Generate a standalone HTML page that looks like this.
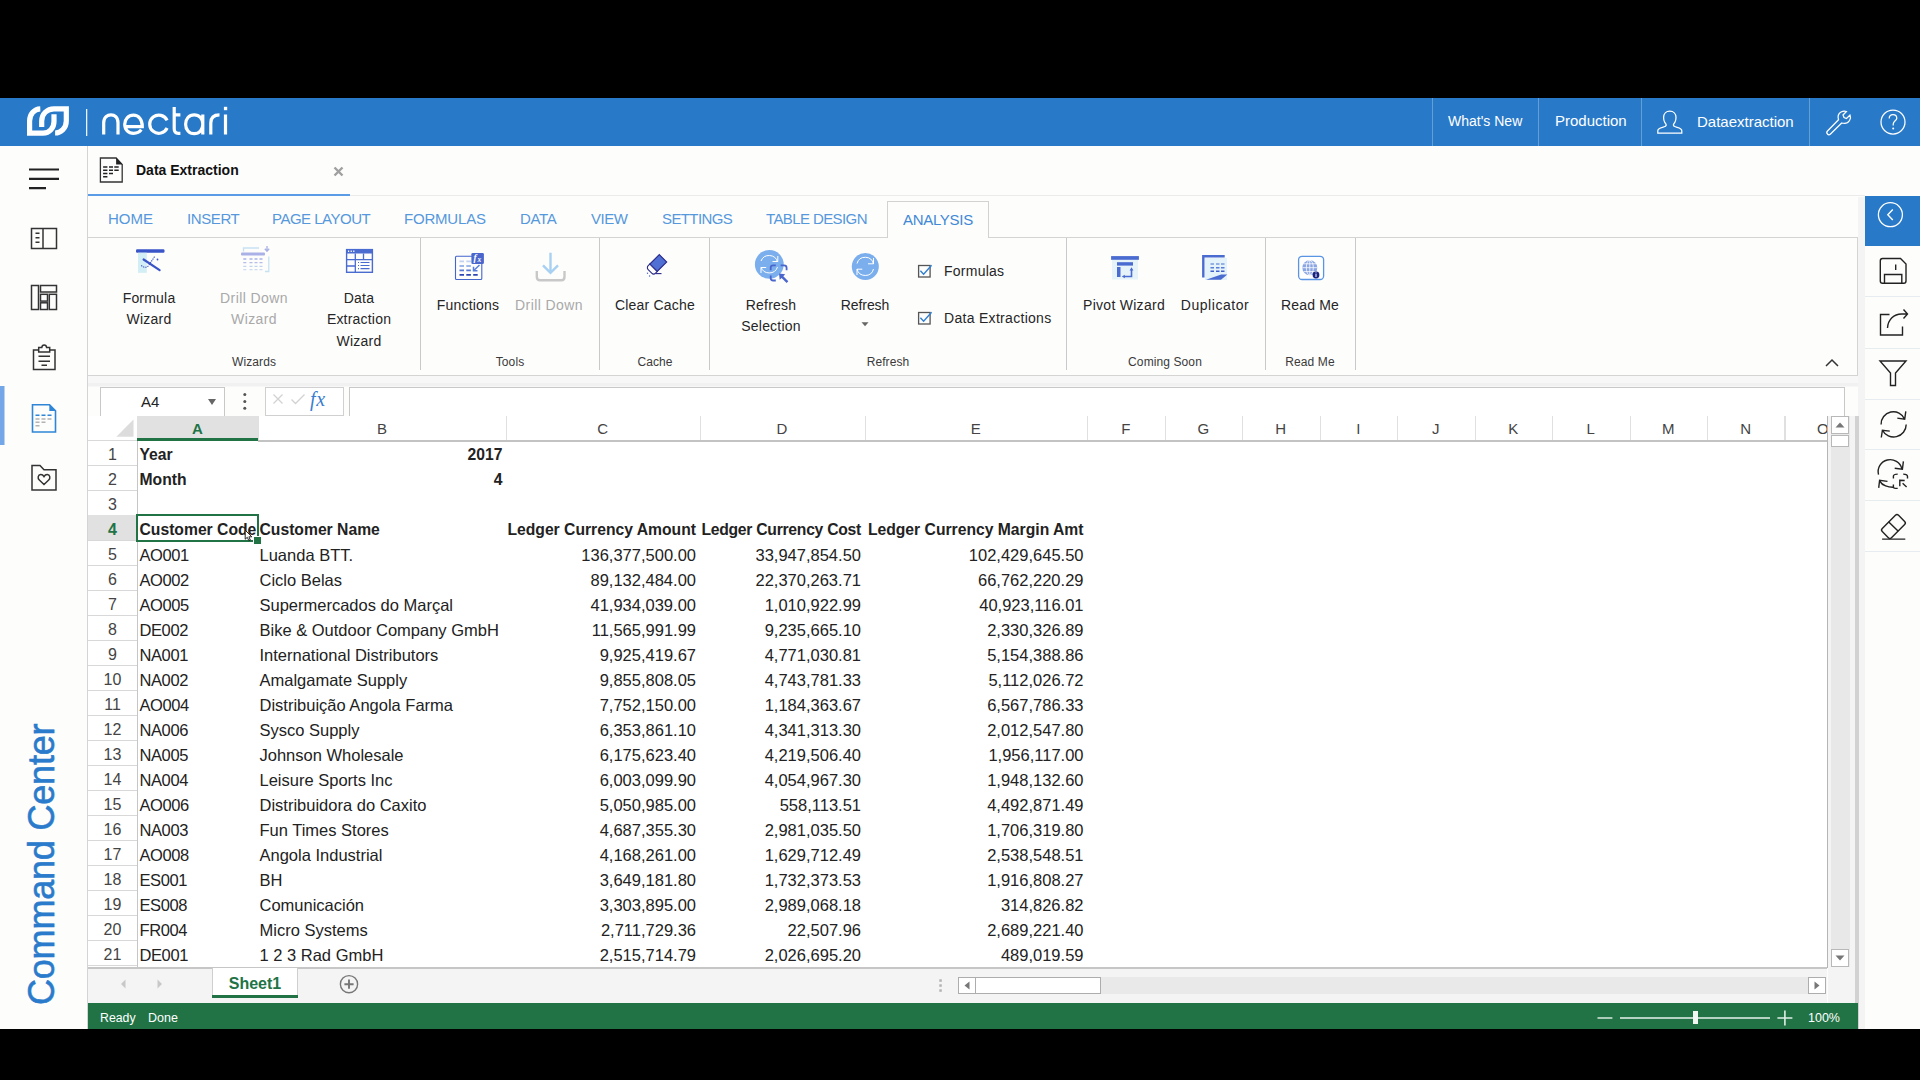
<!DOCTYPE html>
<html><head><meta charset="utf-8">
<style>
*{margin:0;padding:0;box-sizing:border-box}
html,body{width:1920px;height:1080px;overflow:hidden;background:#000;font-family:"Liberation Sans",sans-serif}
.a{position:absolute}
svg{position:absolute;overflow:visible}
#app{position:absolute;left:0;top:98px;width:1920px;height:931px;background:#fdfdfc}
#hdr{position:absolute;left:0;top:98px;width:1920px;height:48px;background:#2879c8;color:#fff}
.hsep{position:absolute;top:0;width:1px;height:48px;background:rgba(255,255,255,0.28)}
.ht{position:absolute;top:14.7px;font-size:15px;color:#fff;white-space:nowrap;line-height:18px}
.rtab{position:absolute;top:210px;font-size:15px;color:#5598dc;white-space:nowrap;line-height:18px}
.bt{position:absolute;font-size:14px;color:#262626;text-align:center;line-height:21.3px;margin-top:1px;letter-spacing:0.2px;white-space:nowrap}
.gl{position:absolute;top:354px;font-size:12px;letter-spacing:0.1px;color:#3a3a3a;text-align:center;white-space:nowrap;line-height:16px}
.sep{position:absolute;top:238px;width:1px;height:132px;background:#c9c9c9}
.ch{position:absolute;top:416px;height:24px;font-size:15px;color:#444;text-align:center;line-height:25px;white-space:nowrap}
.cb{position:absolute;top:416px;width:1px;height:24px;background:#e0e0e0}
.rh{position:absolute;left:88px;width:49px;height:25px;font-size:16px;color:#444;text-align:center;line-height:25.5px;margin-top:0.8px}
.rhb{position:absolute;left:88px;width:49px;height:1.4px;background:#d8d8d8}
.c{position:absolute;height:25px;line-height:26px;font-size:16.5px;color:#222;white-space:nowrap;margin-top:0.6px}
.code{font-size:16.5px;letter-spacing:-0.4px}
.hb{font-weight:bold;font-size:15.7px;margin-top:1.1px}
.r{text-align:right}
.rsd{position:absolute;left:1865px;width:55px;height:1px;background:#e6ecef}
</style></head><body>
<div id="app"></div>

<!-- HEADER -->
<div id="hdr">
  <svg width="1920" height="48" style="left:0;top:0">
    <g fill="none" stroke="#fff" stroke-width="5.2">
      <path d="M40.3,10.8 C34,11 29.6,16.5 29.6,23 L29.6,35.1 L43,35.1 C49.5,35.1 54,30 54,23.5 L54,16.3"/>
      <path d="M55.1,35 C61,35 66.3,30 66.3,23 L66.3,10.8 L54,10.8 C47,10.8 41.7,16 41.7,23 L41.7,29"/>
    </g>
    <rect x="86" y="11" width="1.3" height="27" fill="#fff" opacity="0.9"/>
    <g fill="none" stroke="#fff" stroke-width="3.2">
      <path d="M103.7,36.5 V25 C103.7,19 107.5,16.8 111,16.8 C114.5,16.8 118,19 118,25 V36.5"/>
      <path d="M124.7,28.6 H142.3 C142.4,21.5 138.5,17.1 133.5,17.1 C128.3,17.1 124.7,21.3 124.7,26.2 C124.7,31.6 128.4,35.3 133.5,35.3 C137,35.3 139.6,34 141.3,31.6"/>
      <path d="M167.1,22.4 A9.1,9.1 0 1 0 167.1,30"/>
      <path d="M174.2,8.9 V30.8 C174.2,34.3 175.8,35.3 178.3,35.3 H180.4 M174.2,16.8 H180.4"/>
      <path d="M202.8,16.5 V36.5 M202.8,26.2 C202.8,31.6 199.3,35.7 194.2,35.7 C189,35.7 185.6,31.6 185.6,26.2 C185.6,21 189,16.8 194.2,16.8 C199.3,16.8 202.8,21 202.8,26.2"/>
      <path d="M210.8,36.5 V25 C210.8,19.5 214,16.8 219.5,16.8"/>
      <path d="M225.5,16.5 V36.5"/>
    </g>
    <rect x="223.9" y="8.8" width="3.3" height="3.4" fill="#fff"/>
  </svg>
  <div class="hsep" style="left:1432px"></div>
  <div class="hsep" style="left:1538px"></div>
  <div class="hsep" style="left:1641px"></div>
  <div class="hsep" style="left:1809px"></div>
  <div class="ht" style="left:1448px;font-size:14px;top:14px">What's New</div>
  <div class="ht" style="left:1555px;top:13.5px">Production</div>
  <div class="ht" style="left:1697px">Dataextraction</div>
  <svg width="30" height="30" style="left:1655px;top:10.5px">
    <g fill="none" stroke="#fff" stroke-width="1.25">
      <path d="M2.8,24 V21.8 C2.8,19.8 4.5,19 7.5,18.3 C10,17.7 11.2,17.2 11.2,16 C11.2,15.2 10.2,14.3 9.6,13 C8.8,11.5 8.6,9.8 8.6,8.5 C8.6,4.8 11.2,2.2 14.8,2.2 C18.4,2.2 21,4.8 21,8.5 C21,9.8 20.8,11.5 20,13 C19.4,14.3 18.4,15.2 18.4,16 C18.4,17.2 19.6,17.7 22.1,18.3 C25.1,19 26.8,19.8 26.8,21.8 V24 Z"/>
    </g>
  </svg>
  <svg width="30" height="30" style="left:1823px;top:9px">
    <path fill="none" stroke="#fff" stroke-width="1.25" d="M4.5,24 L15.5,12.8 C14.5,9.5 15.5,6.5 18,5 C19.8,4 22,3.8 23.5,4.5 L20,8 L21,10.5 L23.5,11.5 L27,8 C27.7,9.5 27.5,11.7 26.5,13.5 C25,16 22,17 18.7,16 L7.5,27 C6.5,28 5.3,28 4.5,27 C3.5,26 3.5,25 4.5,24 Z"/>
  </svg>
  <svg width="30" height="30" style="left:1878px;top:9px">
    <circle cx="15" cy="15" r="12" fill="none" stroke="#fff" stroke-width="1.25"/>
    <path fill="none" stroke="#fff" stroke-width="1.25" d="M11.2,11.5 C11.2,9 13,7.5 15,7.5 C17.2,7.5 18.8,9 18.8,11.2 C18.8,13.5 15.2,14.2 15.2,17 V18.5"/>
    <circle cx="15.2" cy="21.5" r="1" fill="#fff"/>
  </svg>
</div>

<!-- LEFT SIDEBAR -->
<div class="a" style="left:87px;top:146px;width:1px;height:883px;background:#d4d4d4"></div>
<svg width="88" height="400" style="left:0;top:146px">
  <g stroke="#222" stroke-width="2.2" fill="none">
    <path d="M29,23.5 H59 M29,32.8 H59 M29,42.2 H46"/>
  </g>
  <g stroke="#333" stroke-width="1.5" fill="none">
    <rect x="31.5" y="82.5" width="25" height="20"/>
    <path d="M43,82.5 V102.5"/>
    <path d="M35.5,87.3 H39.5 M35.5,91.8 H39.5 M35.5,96.2 H39.5"/>
    <rect x="31.5" y="139.5" width="7" height="24"/>
    <rect x="40.5" y="139.5" width="16" height="6.5"/>
    <rect x="40.5" y="148.3" width="7" height="6.8"/>
    <rect x="40.5" y="156.8" width="7" height="6.7"/>
    <rect x="49.3" y="148.3" width="7.2" height="15.2"/>
    <path d="M38.5,204 H33.5 V223.5 H55 V204 H49.5"/>
    <path d="M38.7,206 V201.5 H41.8 C42,199.6 43,199 44.2,199 C45.4,199 46.4,199.6 46.6,201.5 H49.7 V206 Z"/>
    <path d="M38.5,210.3 H50 M38.5,215.2 H50 M41.5,219.3 H47"/>
    <path d="M32,319.5 H40 L44,323.7 H56 V344 H32 Z"/>
    <path d="M44,338.5 L39.3,334 C37.3,332 38,328.8 40.7,328.6 C42.3,328.5 43.4,329.6 44,330.6 C44.6,329.6 45.7,328.5 47.3,328.6 C50,328.8 50.7,332 48.7,334 Z"/>
  </g>
  <rect x="0" y="240" width="4.5" height="59" fill="#74a7e8"/>
  <g fill="none" stroke="#2f86d6" stroke-width="1.6">
    <path d="M32.5,258.8 H49.5 L55.5,264.8 V286 H32.5 Z"/>
  </g>
  <path d="M49.3,258.5 L55.8,265 H49.3 Z" fill="#2f86d6"/>
  <g stroke-width="1.6">
    <path d="M35.5,269.3 H39.5 M41.5,269.3 H45.5 M47.5,269.3 H51.5" stroke="#2f86d6"/>
    <path d="M35.5,273 H39.5 M41.5,273 H45.5 M47.5,273 H51.5 M35.5,276.3 H39.5 M41.5,276.3 H45.5 M35.5,279.7 H39.5" stroke="#b3b3b3"/>
  </g>
</svg>
<div class="a" style="left:21px;top:720px;width:40px;height:285px">
  <div style="position:absolute;left:0;top:285px;width:285px;height:42px;transform-origin:0 0;transform:rotate(-90deg);font-size:36px;letter-spacing:-0.2px;color:#2a7bcb;-webkit-text-stroke:0.6px #2a7bcb;line-height:42px;white-space:nowrap">Command Center</div>
</div>

<!-- TAB BAR -->
<svg width="30" height="30" style="left:95px;top:150px">
  <path d="M5.4,8 H21.1 L27.2,14.4 V32 H5.4 Z" fill="none" stroke="#333" stroke-width="1.3"/>
  <path d="M21.1,7.4 L27.5,14.6 H21.1 Z" fill="#222"/>
  <path d="M8.1,17 H12.4 M14,17 H18 M19.3,17 H23.7 M8.1,20.2 H12.4 M14,20.2 H18 M19.3,20.2 H23.7 M8.1,23.4 H12.4 M14,23.4 H18 M8.1,26.7 H12.4" stroke="#222" stroke-width="1.5"/>
</svg>
<div class="a" style="left:136px;top:162px;font-size:14px;font-weight:bold;color:#111;line-height:17px">Data Extraction</div>
<svg width="14" height="14" style="left:332px;top:165px">
  <path d="M2.5,2.5 L10.5,10.5 M10.5,2.5 L2.5,10.5" stroke="#a0a0a0" stroke-width="2.4"/>
</svg>
<div class="a" style="left:88px;top:194px;width:262px;height:2px;background:#5b9ce6"></div>
<div class="a" style="left:350px;top:195px;width:1515px;height:1px;background:#ebebeb"></div>

<!-- RIBBON TABS -->
<div class="rtab" style="left:108px">HOME</div>
<div class="rtab" style="left:187px;letter-spacing:-0.4px">INSERT</div>
<div class="rtab" style="left:272px;letter-spacing:-0.5px">PAGE LAYOUT</div>
<div class="rtab" style="left:404px;letter-spacing:-0.2px">FORMULAS</div>
<div class="rtab" style="left:520px;letter-spacing:-0.3px">DATA</div>
<div class="rtab" style="left:591px;letter-spacing:-0.5px">VIEW</div>
<div class="rtab" style="left:662px;letter-spacing:-0.6px">SETTINGS</div>
<div class="rtab" style="left:766px;letter-spacing:-0.6px">TABLE DESIGN</div>
<div class="a" style="left:887px;top:201px;width:102px;height:37px;border:1px solid #d2d2d2;border-bottom:none;background:#fdfdfc;z-index:2"></div>
<div class="rtab" style="left:903px;top:211px;letter-spacing:-0.3px;color:#3f89d6;z-index:3">ANALYSIS</div>

<!-- RIBBON BODY -->
<div class="a" style="left:88px;top:237px;width:799px;height:1px;background:#d4d4d4"></div>
<div class="a" style="left:988px;top:237px;width:870px;height:1px;background:#d4d4d4"></div>
<div class="a" style="left:88px;top:375px;width:1770px;height:1px;background:#d4d4d4"></div>
<div class="a" style="left:1857px;top:237px;width:1px;height:139px;background:#d4d4d4"></div>
<div class="a" style="left:88px;top:376px;width:1777px;height:11px;background:#f7f7f7"></div>
<div class="a" style="left:88px;top:383px;width:1770px;height:3px;background:#f1f1f1"></div>
<div class="a" style="left:1858px;top:197px;width:7px;height:832px;background:#f4f4f4"></div>
<div class="sep" style="left:420px"></div>
<div class="sep" style="left:599px"></div>
<div class="sep" style="left:709px"></div>
<div class="sep" style="left:1066px"></div>
<div class="sep" style="left:1265px"></div>
<div class="sep" style="left:1355px"></div>

<div class="bt" style="left:99px;width:100px;top:287px">Formula<br>Wizard</div>
<div class="bt" style="left:204px;width:100px;top:287px;color:#a9a9a9;letter-spacing:0.4px">Drill Down<br>Wizard</div>
<div class="bt" style="left:309px;width:100px;top:287px">Data<br>Extraction<br>Wizard</div>
<div class="gl" style="left:204px;width:100px">Wizards</div>

<div class="bt" style="left:428px;width:80px;top:294px">Functions</div>
<div class="bt" style="left:509px;width:80px;top:294px;color:#a9a9a9;letter-spacing:0.4px">Drill Down</div>
<div class="gl" style="left:460px;width:100px">Tools</div>

<div class="bt" style="left:605px;width:100px;top:294px">Clear Cache</div>
<div class="gl" style="left:605px;width:100px">Cache</div>

<div class="bt" style="left:721px;width:100px;top:294px">Refresh<br>Selection</div>
<div class="bt" style="left:815px;width:100px;top:294px;letter-spacing:-0.1px">Refresh</div>
<svg width="12" height="8" style="left:859px;top:321px"><path d="M2.5,1.2 H9.5 L6,5.2 Z" fill="#666"/></svg>
<div class="bt" style="left:944px;top:260px;text-align:left;letter-spacing:0.25px">Formulas</div>
<div class="bt" style="left:944px;top:307px;text-align:left;letter-spacing:0.3px">Data Extractions</div>
<svg width="16" height="16" style="left:917px;top:263px">
  <rect x="1.6" y="2.5" width="11.5" height="11.5" fill="none" stroke="#555" stroke-width="1.3"/>
  <path d="M3.4,7.8 L6.6,11.2 L14.6,2.2" fill="none" stroke="#2f7fd4" stroke-width="1.4"/>
</svg>
<svg width="16" height="16" style="left:917px;top:310px">
  <rect x="1.6" y="2.5" width="11.5" height="11.5" fill="none" stroke="#555" stroke-width="1.3"/>
  <path d="M3.4,7.8 L6.6,11.2 L14.6,2.2" fill="none" stroke="#2f7fd4" stroke-width="1.4"/>
</svg>
<div class="gl" style="left:838px;width:100px">Refresh</div>

<div class="bt" style="left:1074px;width:100px;top:294px;letter-spacing:0.28px">Pivot Wizard</div>
<div class="bt" style="left:1165px;width:100px;top:294px;letter-spacing:0.55px">Duplicator</div>
<div class="gl" style="left:1115px;width:100px">Coming Soon</div>

<div class="bt" style="left:1260px;width:100px;top:294px">Read Me</div>
<div class="gl" style="left:1260px;width:100px">Read Me</div>
<svg width="16" height="10" style="left:1824px;top:357.8px"><path d="M2,8 L8,2 L14,8" fill="none" stroke="#333" stroke-width="1.5"/></svg>

<!-- RIBBON ICONS -->
<svg width="40" height="35" style="left:130px;top:243px">
  <rect x="6" y="6.2" width="28.5" height="3.5" rx="1.2" fill="#3a55c8"/>
  <rect x="8" y="9.7" width="8.8" height="20.1" fill="#d3eef4"/>
  <path d="M13.6,16.5 L29.6,27.2" stroke="#3a55c8" stroke-width="2.2" stroke-linecap="round"/>
  <path d="M11.3,22.4 C13,24.5 16,25 18.5,22.7 L24.6,13.6" stroke="#3a55c8" stroke-width="1.1" fill="none" stroke-dasharray="1.3 0.9"/>
  <circle cx="27.5" cy="16.5" r="0.9" fill="#3a55c8"/>
</svg>
<svg width="40" height="35" style="left:235px;top:243px">
  <path d="M8.5,8.5 V5 H24" stroke="#c6e2f2" stroke-width="1.3" fill="none"/>
  <rect x="6" y="9.4" width="24" height="3.2" rx="1" fill="#a9b1e6"/>
  <path d="M33.8,13.5 V28.5 H30" stroke="#c6e2f2" stroke-width="1.3" fill="none"/>
  <path d="M32,3 V8 M29.8,5.8 L32,8.2 L34.2,5.8" stroke="#a9b1e6" stroke-width="1.3" fill="none"/>
  <g stroke-width="1.3">
    <path d="M8.3,16 H11.3 M14.5,16 H17.5 M19.5,16 H22.5 M24.5,16 H27.5" stroke="#a9b4e8"/>
    <path d="M8.3,19.7 H11.3 M14.5,19.7 H17.5 M19.5,19.7 H22.5 M24.5,19.7 H27.5" stroke="#b3bde8"/>
    <path d="M8.3,23.3 H11.3 M14.5,23.3 H17.5 M19.5,23.3 H22.5 M24.5,23.3 H27.5" stroke="#c2d3ee"/>
    <path d="M8.3,26.7 H11.3 M14.5,26.7 H17.5 M19.5,26.7 H22.5 M24.5,26.7 H27.5" stroke="#cfdcf0"/>
  </g>
</svg>
<svg width="40" height="35" style="left:335px;top:243px">
  <rect x="11.6" y="6.6" width="25.8" height="22.7" fill="none" stroke="#4a6bd0" stroke-width="1.4"/>
  <rect x="11" y="6" width="27" height="4.5" fill="#4a6bd0"/>
  <path d="M13,8.3 H14.2 M15.6,8.3 H16.8 M18.2,8.3 H19.4" stroke="#fff" stroke-width="1.4"/>
  <path d="M11,16.6 H38 M20.3,10.5 V29.3 M28.5,10.5 V16.6 M11,23 H20.3" stroke="#4a6bd0" stroke-width="1.3"/>
  <path d="M23,19.5 H24 M25.5,19.5 H34.5 M23,22.5 H24 M25.5,22.5 H34.5 M23,25.6 H24 M25.5,25.6 H34.5" stroke="#4a6bd0" stroke-width="1.1"/>
</svg>

<svg width="40" height="37" style="left:450px;top:248px">
  <rect x="5.5" y="8.3" width="26.3" height="23.2" rx="1" fill="none" stroke="#4466cc" stroke-width="1.1"/>
  <path d="M9.5,13.4 H14 M16.3,13.4 H20.9" stroke="#c4d2ef" stroke-width="1.6"/>
  <path d="M9.5,18 H14 M16.3,18 H20.9" stroke="#7ea0e3" stroke-width="1.6"/>
  <path d="M9.5,22.4 H14 M16.3,22.4 H20.9" stroke="#5677d4" stroke-width="1.6"/>
  <path d="M9.5,26.9 H14 M16.3,26.9 H20.9 M23.2,26.9 H27.7" stroke="#2d46b4" stroke-width="1.6"/>
  <rect x="21.4" y="5" width="12.5" height="11" rx="1.3" fill="#4a66cc"/>
  <text x="23.6" y="13.3" font-family="Liberation Serif" font-style="italic" font-weight="bold" font-size="9.5" fill="#fff">f</text>
  <text x="27.4" y="13.5" font-family="Liberation Serif" font-style="italic" font-weight="bold" font-size="7.5" fill="#fff">x</text>
  <path d="M29.5,17 L23.8,22.5 M23.5,18.8 V22.8 H27.5" stroke="#5a7edb" stroke-width="1.5" fill="none"/>
</svg>
<svg width="40" height="37" style="left:530px;top:248px">
  <path d="M6.8,23 V28.8 C6.8,31 8,32.3 10,32.3 H31.5 C33.5,32.3 34.5,31 34.5,28.8 V23" stroke="#c8c8c8" stroke-width="2.4" fill="none"/>
  <path d="M20.5,4.8 V25.5 M13,17.3 L20.5,24.8 L28,17.3" stroke="#a8d0f2" stroke-width="2.4" fill="none"/>
</svg>
<svg width="40" height="37" style="left:640px;top:248px">
  <path d="M19.3,6.6 L26.7,14 L17.2,23.5 L9.8,16.1 Z" fill="#5170d4" stroke="#2a2a8a" stroke-width="1.1"/>
  <path d="M9.8,16.1 L17.2,23.5 L15.6,25.1 C14.5,26.2 12.8,26.2 11.7,25.1 L8.2,21.6 C7.1,20.5 7.1,18.8 8.2,17.7 Z" fill="#fff" stroke="#2a2a8a" stroke-width="1.1"/>
  <path d="M15.5,25.6 H21.5" stroke="#2a2a8a" stroke-width="1.1"/>
  <circle cx="7.5" cy="25.3" r="0.7" fill="#4a66cc"/>
  <circle cx="9.6" cy="28" r="0.7" fill="#4a66cc"/>
</svg>

<svg width="50" height="40" style="left:750px;top:246px">
  <circle cx="19.3" cy="18.4" r="14.4" fill="#7aaeed"/>
  <g stroke="#fff" stroke-width="1" fill="none">
    <path d="M27.5,16 A8.7,8.7 0 0 0 11,15"/>
    <path d="M11,21 A8.7,8.7 0 0 0 27.5,21"/>
    <path d="M27.8,10 V15.5 H22.5 M11,27 V21.5 H16.2"/>
  </g>
  <path d="M20.7,24.2 V21.5 C20.7,20 21.8,19.3 23.3,19.3 H25.8 M30.6,19.3 H34 C35.7,19.3 36.6,20.3 36.6,21.8 V24.3 M20.7,29.4 V32.3 C20.7,33.8 21.6,34.5 23.2,34.5 H25.8" stroke="#4a66cc" stroke-width="1.8" fill="none"/>
  <path d="M29,27.6 L35.2,28.3 L33.3,30.2 L38.3,35.2 L36.6,36.9 L31.6,31.9 L29.7,33.8 Z" fill="#4a66cc"/>
</svg>
<svg width="40" height="40" style="left:845px;top:246px">
  <circle cx="20.3" cy="20.5" r="13.5" fill="#7aaeed"/>
  <g stroke="#fff" stroke-width="1" fill="none">
    <path d="M28.5,18 A8.5,8.5 0 0 0 12,17.5"/>
    <path d="M12,23 A8.5,8.5 0 0 0 28.5,23"/>
    <path d="M28.5,12 V17.8 H23 M12,29 V23.2 H17.3"/>
  </g>
</svg>

<svg width="40" height="35" style="left:1105px;top:250px">
  <rect x="6.1" y="6.1" width="27.8" height="3.7" fill="#4a6bd0"/>
  <rect x="7" y="10" width="26" height="19.5" fill="#e6f3f8"/>
  <rect x="12" y="12.2" width="16" height="3.4" fill="#4a6bd0"/>
  <rect x="12" y="17" width="3.5" height="10" fill="#4a6bd0"/>
  <path d="M26.5,19.5 V26.5 H19" stroke="#4a6bd0" stroke-width="1.6" fill="none"/>
  <path d="M24.6,20.5 L26.5,17.3 L28.4,20.5 Z M19.8,24.7 L16.8,26.5 L19.8,28.3 Z" fill="#4a6bd0"/>
</svg>
<svg width="40" height="35" style="left:1195px;top:250px">
  <rect x="10" y="8" width="22" height="22" fill="#e4f3f9"/>
  <path d="M8.3,27.6 V6.3 H29.7" stroke="#4a6bd0" stroke-width="2.4" fill="none"/>
  <path d="M11,29.7 H26 L32.3,24.5 H26.2 Z" fill="#4a6bd0"/>
  <path d="M15.5,14 H19 M21,14 H24.5 M26,14 H29.5" stroke="#7c9ae0" stroke-width="1.5"/>
  <path d="M15.5,17.7 H19 M21,17.7 H24.5 M26,17.7 H29.5" stroke="#5a7bd8" stroke-width="1.5"/>
  <path d="M15.5,21.3 H19 M21,21.3 H24.5 M26,21.3 H29.5" stroke="#3f5fcc" stroke-width="1.5"/>
</svg>
<svg width="40" height="35" style="left:1290px;top:250px">
  <rect x="8.6" y="6.3" width="25" height="23.2" rx="3.5" fill="#fff" stroke="#5a95e3" stroke-width="1.3"/>
  <circle cx="19.8" cy="17.7" r="7.5" fill="#8aa5e3"/>
  <g stroke="#fff" stroke-width="0.8" fill="none">
    <path d="M12.3,17.7 H27.3 M13.5,13.8 H26 M13.5,21.6 H26 M19.8,10.2 V25.2"/>
    <ellipse cx="19.8" cy="17.7" rx="3.5" ry="7.5"/>
  </g>
  <circle cx="26" cy="25" r="3.4" fill="#1b2380"/>
  <path d="M26,23.8 V27" stroke="#fff" stroke-width="1"/>
  <circle cx="26" cy="22.7" r="0.5" fill="#fff"/>
</svg>

<!-- FORMULA BAR -->
<div class="a" style="left:100px;top:387px;width:125px;height:29px;border:1px solid #c8c8c8;border-bottom:none;background:#fff"></div>
<div class="a" style="left:141px;top:393px;font-size:15px;color:#222;line-height:18px">A4</div>
<svg width="12" height="10" style="left:206px;top:397px"><path d="M2,2 H10 L6,8 Z" fill="#666"/></svg>
<svg width="8" height="22" style="left:241px;top:391px"><circle cx="3.8" cy="3.5" r="1.5" fill="#555"/><circle cx="3.8" cy="10.5" r="1.5" fill="#555"/><circle cx="3.8" cy="17.3" r="1.5" fill="#555"/></svg>
<div class="a" style="left:265px;top:387px;width:79px;height:29px;border:1px solid #d0d0d0;background:#fff"></div>
<svg width="80" height="26" style="left:265px;top:388px"><path d="M8.5,6.5 L17.5,15.5 M17.5,6.5 L8.5,15.5" stroke="#d2d2d2" stroke-width="1.3"/><path d="M26.5,11.5 L30.5,15.5 L39.5,6.5" stroke="#d2d2d2" stroke-width="1.3" fill="none"/></svg>
<div class="a" style="left:310px;top:388px;font-family:'Liberation Serif';font-style:italic;font-size:20px;letter-spacing:0.6px;color:#3b7ed0;line-height:22px">fx</div>
<div class="a" style="left:349px;top:387px;width:1496px;height:29px;border:1px solid #c8c8c8;border-bottom:none;background:#fff"></div>

<!-- GRID -->
<div class="a" style="left:88px;top:416px;width:1739px;height:551px;background:#fff"></div>
<svg width="20" height="20" style="left:116px;top:419px"><path d="M17.5,0.5 V17.8 H0.3 Z" fill="#dcdcdc"/></svg>
<div class="a" style="left:137px;top:416px;width:121px;height:22px;background:#e1e1e1"></div>
<div class="a" style="left:137px;top:438px;width:121px;height:2.5px;background:#217346"></div>
<div class="a" style="left:88px;top:440px;width:49px;height:1px;background:#d9d9d9"></div>
<div class="a" style="left:258px;top:440px;width:1569px;height:1.5px;background:#c3c3c3"></div>
<div class="ch" style="left:137px;width:121px;color:#217346;font-weight:bold">A</div>
<div class="ch" style="left:258px;width:248px">B</div>
<div class="cb" style="left:258px"></div>
<div class="ch" style="left:506px;width:193.5px">C</div>
<div class="cb" style="left:506px"></div>
<div class="ch" style="left:699.5px;width:165.0px">D</div>
<div class="cb" style="left:699.5px"></div>
<div class="ch" style="left:864.5px;width:222.5px">E</div>
<div class="cb" style="left:864.5px"></div>
<div class="ch" style="left:1087px;width:77.5px">F</div>
<div class="cb" style="left:1087px"></div>
<div class="ch" style="left:1164.5px;width:77.5px">G</div>
<div class="cb" style="left:1164.5px"></div>
<div class="ch" style="left:1242.0px;width:77.5px">H</div>
<div class="cb" style="left:1242.0px"></div>
<div class="ch" style="left:1319.5px;width:77.5px">I</div>
<div class="cb" style="left:1319.5px"></div>
<div class="ch" style="left:1397.0px;width:77.5px">J</div>
<div class="cb" style="left:1397.0px"></div>
<div class="ch" style="left:1474.5px;width:77.5px">K</div>
<div class="cb" style="left:1474.5px"></div>
<div class="ch" style="left:1552.0px;width:77.5px">L</div>
<div class="cb" style="left:1552.0px"></div>
<div class="ch" style="left:1629.5px;width:77.5px">M</div>
<div class="cb" style="left:1629.5px"></div>
<div class="ch" style="left:1707.0px;width:77.5px">N</div>
<div class="cb" style="left:1707.0px"></div>
<div class="a" style="left:1784px;top:416px;width:43px;height:24px;overflow:hidden"><div class="ch" style="left:0;top:0;width:77.5px">O</div></div>
<div class="cb" style="left:1784.5px"></div>
<div class="cb" style="left:1784px"></div>
<div class="a" style="left:137px;top:441px;width:1px;height:526px;background:#c6c6c6"></div>
<div class="rh" style="top:441px">1</div>
<div class="rhb" style="top:465px"></div>
<div class="rh" style="top:466px">2</div>
<div class="rhb" style="top:490px"></div>
<div class="rh" style="top:491px">3</div>
<div class="rhb" style="top:515px"></div>
<div class="a" style="left:88px;top:515px;width:49px;height:25px;background:#e1e1e1"></div>
<div class="rh" style="top:516px;color:#217346;font-weight:bold">4</div>
<div class="rhb" style="top:540px"></div>
<div class="rh" style="top:541px">5</div>
<div class="rhb" style="top:565px"></div>
<div class="rh" style="top:566px">6</div>
<div class="rhb" style="top:590px"></div>
<div class="rh" style="top:591px">7</div>
<div class="rhb" style="top:615px"></div>
<div class="rh" style="top:616px">8</div>
<div class="rhb" style="top:640px"></div>
<div class="rh" style="top:641px">9</div>
<div class="rhb" style="top:665px"></div>
<div class="rh" style="top:666px">10</div>
<div class="rhb" style="top:690px"></div>
<div class="rh" style="top:691px">11</div>
<div class="rhb" style="top:715px"></div>
<div class="rh" style="top:716px">12</div>
<div class="rhb" style="top:740px"></div>
<div class="rh" style="top:741px">13</div>
<div class="rhb" style="top:765px"></div>
<div class="rh" style="top:766px">14</div>
<div class="rhb" style="top:790px"></div>
<div class="rh" style="top:791px">15</div>
<div class="rhb" style="top:815px"></div>
<div class="rh" style="top:816px">16</div>
<div class="rhb" style="top:840px"></div>
<div class="rh" style="top:841px">17</div>
<div class="rhb" style="top:865px"></div>
<div class="rh" style="top:866px">18</div>
<div class="rhb" style="top:890px"></div>
<div class="rh" style="top:891px">19</div>
<div class="rhb" style="top:915px"></div>
<div class="rh" style="top:916px">20</div>
<div class="rhb" style="top:940px"></div>
<div class="rh" style="top:941px">21</div>
<div class="rhb" style="top:965px"></div>
<div class="c hb" style="left:139.5px;top:441px">Year</div>
<div class="c hb" style="right:1417.5px;top:441px">2017</div>
<div class="c hb" style="left:139.5px;top:466px">Month</div>
<div class="c hb" style="right:1417.5px;top:466px">4</div>
<div class="c hb" style="left:139.5px;top:516px">Customer Code</div>
<div class="c hb" style="left:259.5px;top:516px">Customer Name</div>
<div class="c hb" style="right:1224.0px;top:516px">Ledger Currency Amount</div>
<div class="c hb" style="right:1059.0px;top:516px"><span style="letter-spacing:-0.26px">Ledger Currency Cost</span></div>
<div class="c hb" style="right:836.5px;top:516px">Ledger Currency Margin Amt</div>
<div class="c code" style="left:139.5px;top:541px">AO001</div>
<div class="c " style="left:259.5px;top:541px">Luanda BTT.</div>
<div class="c " style="right:1224.0px;top:541px">136,377,500.00</div>
<div class="c " style="right:1059.0px;top:541px">33,947,854.50</div>
<div class="c " style="right:836.5px;top:541px">102,429,645.50</div>
<div class="c code" style="left:139.5px;top:566px">AO002</div>
<div class="c " style="left:259.5px;top:566px">Ciclo Belas</div>
<div class="c " style="right:1224.0px;top:566px">89,132,484.00</div>
<div class="c " style="right:1059.0px;top:566px">22,370,263.71</div>
<div class="c " style="right:836.5px;top:566px">66,762,220.29</div>
<div class="c code" style="left:139.5px;top:591px">AO005</div>
<div class="c " style="left:259.5px;top:591px">Supermercados do Marçal</div>
<div class="c " style="right:1224.0px;top:591px">41,934,039.00</div>
<div class="c " style="right:1059.0px;top:591px">1,010,922.99</div>
<div class="c " style="right:836.5px;top:591px">40,923,116.01</div>
<div class="c code" style="left:139.5px;top:616px">DE002</div>
<div class="c " style="left:259.5px;top:616px">Bike &amp; Outdoor Company GmbH</div>
<div class="c " style="right:1224.0px;top:616px">11,565,991.99</div>
<div class="c " style="right:1059.0px;top:616px">9,235,665.10</div>
<div class="c " style="right:836.5px;top:616px">2,330,326.89</div>
<div class="c code" style="left:139.5px;top:641px">NA001</div>
<div class="c " style="left:259.5px;top:641px">International Distributors</div>
<div class="c " style="right:1224.0px;top:641px">9,925,419.67</div>
<div class="c " style="right:1059.0px;top:641px">4,771,030.81</div>
<div class="c " style="right:836.5px;top:641px">5,154,388.86</div>
<div class="c code" style="left:139.5px;top:666px">NA002</div>
<div class="c " style="left:259.5px;top:666px">Amalgamate Supply</div>
<div class="c " style="right:1224.0px;top:666px">9,855,808.05</div>
<div class="c " style="right:1059.0px;top:666px">4,743,781.33</div>
<div class="c " style="right:836.5px;top:666px">5,112,026.72</div>
<div class="c code" style="left:139.5px;top:691px">AO004</div>
<div class="c " style="left:259.5px;top:691px">Distribuição Angola Farma</div>
<div class="c " style="right:1224.0px;top:691px">7,752,150.00</div>
<div class="c " style="right:1059.0px;top:691px">1,184,363.67</div>
<div class="c " style="right:836.5px;top:691px">6,567,786.33</div>
<div class="c code" style="left:139.5px;top:716px">NA006</div>
<div class="c " style="left:259.5px;top:716px">Sysco Supply</div>
<div class="c " style="right:1224.0px;top:716px">6,353,861.10</div>
<div class="c " style="right:1059.0px;top:716px">4,341,313.30</div>
<div class="c " style="right:836.5px;top:716px">2,012,547.80</div>
<div class="c code" style="left:139.5px;top:741px">NA005</div>
<div class="c " style="left:259.5px;top:741px">Johnson Wholesale</div>
<div class="c " style="right:1224.0px;top:741px">6,175,623.40</div>
<div class="c " style="right:1059.0px;top:741px">4,219,506.40</div>
<div class="c " style="right:836.5px;top:741px">1,956,117.00</div>
<div class="c code" style="left:139.5px;top:766px">NA004</div>
<div class="c " style="left:259.5px;top:766px">Leisure Sports Inc</div>
<div class="c " style="right:1224.0px;top:766px">6,003,099.90</div>
<div class="c " style="right:1059.0px;top:766px">4,054,967.30</div>
<div class="c " style="right:836.5px;top:766px">1,948,132.60</div>
<div class="c code" style="left:139.5px;top:791px">AO006</div>
<div class="c " style="left:259.5px;top:791px">Distribuidora do Caxito</div>
<div class="c " style="right:1224.0px;top:791px">5,050,985.00</div>
<div class="c " style="right:1059.0px;top:791px">558,113.51</div>
<div class="c " style="right:836.5px;top:791px">4,492,871.49</div>
<div class="c code" style="left:139.5px;top:816px">NA003</div>
<div class="c " style="left:259.5px;top:816px">Fun Times Stores</div>
<div class="c " style="right:1224.0px;top:816px">4,687,355.30</div>
<div class="c " style="right:1059.0px;top:816px">2,981,035.50</div>
<div class="c " style="right:836.5px;top:816px">1,706,319.80</div>
<div class="c code" style="left:139.5px;top:841px">AO008</div>
<div class="c " style="left:259.5px;top:841px">Angola Industrial</div>
<div class="c " style="right:1224.0px;top:841px">4,168,261.00</div>
<div class="c " style="right:1059.0px;top:841px">1,629,712.49</div>
<div class="c " style="right:836.5px;top:841px">2,538,548.51</div>
<div class="c code" style="left:139.5px;top:866px">ES001</div>
<div class="c " style="left:259.5px;top:866px">BH</div>
<div class="c " style="right:1224.0px;top:866px">3,649,181.80</div>
<div class="c " style="right:1059.0px;top:866px">1,732,373.53</div>
<div class="c " style="right:836.5px;top:866px">1,916,808.27</div>
<div class="c code" style="left:139.5px;top:891px">ES008</div>
<div class="c " style="left:259.5px;top:891px">Comunicación</div>
<div class="c " style="right:1224.0px;top:891px">3,303,895.00</div>
<div class="c " style="right:1059.0px;top:891px">2,989,068.18</div>
<div class="c " style="right:836.5px;top:891px">314,826.82</div>
<div class="c code" style="left:139.5px;top:916px">FR004</div>
<div class="c " style="left:259.5px;top:916px">Micro Systems</div>
<div class="c " style="right:1224.0px;top:916px">2,711,729.36</div>
<div class="c " style="right:1059.0px;top:916px">22,507.96</div>
<div class="c " style="right:836.5px;top:916px">2,689,221.40</div>
<div class="c code" style="left:139.5px;top:941px">DE001</div>
<div class="c " style="left:259.5px;top:941px">1 2 3 Rad GmbH</div>
<div class="c " style="right:1224.0px;top:941px">2,515,714.79</div>
<div class="c " style="right:1059.0px;top:941px">2,026,695.20</div>
<div class="c " style="right:836.5px;top:941px">489,019.59</div>
<div class="a" style="left:135.5px;top:513.5px;width:123.5px;height:28.5px;border:2.5px solid #217346"></div>
<div class="a" style="left:253px;top:536px;width:6.5px;height:6.5px;background:#217346;border:1px solid #fdfdfc;box-sizing:content-box"></div>
<svg width="12" height="14" style="left:244px;top:529px"><path d="M1.2,1.2 V10.2 L3.3,8.3 L4.8,11.6 L6.3,11 L4.9,7.8 L7.8,7.8 Z" fill="#fff" stroke="#111" stroke-width="0.9"/></svg>
<div class="a" style="left:88px;top:967px;width:1739px;height:1.5px;background:#c6c6c6"></div>
<div class="a" style="left:1826.5px;top:416px;width:1px;height:552px;background:#b5b5b5"></div>
<div class="a" style="left:1827.5px;top:416px;width:27.5px;height:613px;background:#f4f4f5"></div>
<div class="a" style="left:1831px;top:416px;width:19px;height:551px;background:#e8e8e8"></div>
<div class="a" style="left:1831px;top:416px;width:18px;height:17.5px;background:#fff;border:1px solid #b8b8b8"></div>
<svg width="18" height="18" style="left:1831px;top:416px"><path d="M4.5,11.5 H13.5 L9,6.5 Z" fill="#777"/></svg>
<div class="a" style="left:1831px;top:435px;width:18px;height:12px;background:#fff;border:1px solid #b8b8b8"></div>
<div class="a" style="left:1831px;top:949px;width:18px;height:18px;background:#fff;border:1px solid #b8b8b8"></div>
<svg width="18" height="18" style="left:1831px;top:949px"><path d="M4.5,6.5 H13.5 L9,11.5 Z" fill="#777"/></svg>
<div class="a" style="left:1855px;top:416px;width:3.5px;height:613px;background:#d2d2d2"></div>

<!-- SHEET TABS -->
<div class="a" style="left:88px;top:968.5px;width:1739px;height:34.5px;background:#f4f4f5"></div>
<svg width="60" height="20" style="left:113px;top:974px"><path d="M12.5,5.5 V14.5 L8,10 Z" fill="#c8c8c8"/><path d="M44.5,5.5 V14.5 L49,10 Z" fill="#c8c8c8"/></svg>
<div class="a" style="left:212px;top:967.5px;width:86px;height:30px;background:#fff;border:1px solid #cfcfcf;border-top:none;border-bottom:none"></div>
<div class="a" style="left:211.5px;top:995px;width:86.5px;height:3px;background:#217346"></div>
<div class="a" style="left:212px;top:974.5px;width:86px;text-align:center;font-size:16px;font-weight:bold;color:#217346;line-height:18px">Sheet1</div>
<svg width="24" height="24" style="left:337px;top:972px"><circle cx="12" cy="12.2" r="8.6" fill="none" stroke="#777" stroke-width="1.4"/><path d="M12,7.6 V16.8 M7.4,12.2 H16.6" stroke="#777" stroke-width="1.9"/></svg>
<svg width="8" height="20" style="left:937px;top:977px"><rect x="2.3" y="2.3" width="2.5" height="2.5" fill="#b3b3b3"/><rect x="2.3" y="7.3" width="2.5" height="2.5" fill="#b3b3b3"/><rect x="2.3" y="12.3" width="2.5" height="2.5" fill="#b3b3b3"/></svg>
<div class="a" style="left:958px;top:976.5px;width:850px;height:17.5px;background:#e9e9e9"></div>
<div class="a" style="left:958px;top:976.5px;width:18px;height:17.5px;background:#fff;border:1px solid #adadad"></div>
<svg width="18" height="18" style="left:958px;top:976px"><path d="M11.5,5.5 V13.5 L6.5,9.5 Z" fill="#777"/></svg>
<div class="a" style="left:975px;top:976.5px;width:126px;height:17.5px;background:#fff;border:1px solid #adadad"></div>
<div class="a" style="left:1808px;top:976.5px;width:18px;height:17.5px;background:#fff;border:1px solid #adadad"></div>
<svg width="18" height="18" style="left:1808px;top:976px"><path d="M6.5,5.5 V13.5 L11.5,9.5 Z" fill="#777"/></svg>

<!-- STATUS BAR -->
<div class="a" style="left:88px;top:1003px;width:1770px;height:26px;background:#217346"></div>
<div class="a" style="left:100px;top:1011px;font-size:12.3px;color:#fff;line-height:15px">Ready</div>
<div class="a" style="left:148px;top:1011px;font-size:12.5px;color:#fff;line-height:15px">Done</div>
<svg width="200" height="26" style="left:1590px;top:1003px"><path d="M7.5,15 H22.4" stroke="#cfe3d6" stroke-width="1.6"/><path d="M30,15 H180" stroke="#e8f2ec" stroke-width="1.5"/><rect x="103" y="8" width="5" height="13" fill="#f2f7f4"/><path d="M194.9,7.5 V22.5 M187.4,15 H202.4" stroke="#e0eee6" stroke-width="1.6"/></svg>
<div class="a" style="left:1808px;top:1011px;font-size:12.5px;color:#fff;line-height:15px">100%</div>

<!-- RIGHT SIDEBAR -->
<div class="a" style="left:1865px;top:196px;width:55px;height:50px;background:#2879c8"></div>
<svg width="55" height="50" style="left:1865px;top:196px">
  <circle cx="25.4" cy="18.7" r="12" fill="none" stroke="#fff" stroke-width="1.3"/>
  <path d="M27.8,13.5 L22.8,18.7 L27.8,23.9" fill="none" stroke="#fff" stroke-width="1.4"/>
</svg>
<div class="rsd" style="top:296px"></div>
<div class="rsd" style="top:347.5px"></div>
<div class="rsd" style="top:398.5px"></div>
<div class="rsd" style="top:449px"></div>
<div class="rsd" style="top:500px"></div>
<div class="rsd" style="top:551px"></div>
<svg width="55" height="320" style="left:1865px;top:246px">
  <g fill="none" stroke="#222" stroke-width="1.4">
    <path d="M17.5,12.5 H35.5 L41,18 V35 C41,36.5 40.3,37.3 38.8,37.3 H17.5 C16,37.3 15.3,36.5 15.3,35 V14.7 C15.3,13.2 16,12.5 17.5,12.5 Z"/>
    <path d="M19.5,37.3 V28.5 H36.8 V37.3 M30.7,18.5 V24"/>
    <path d="M24.5,68.5 H15.5 V89 H37.5 V80.5"/>
    <path d="M22.5,82 C23,73.5 29,68 36.5,68 H42 M38.5,63.5 L42.5,68 L38.5,72.5"/>
    <path d="M15,115 H41 L30.5,127 V139.5 H25.5 V127 Z"/>
    <path d="M16.1,178.5 A12.3,12.3 0 0 1 39.7,173.2 M40.8,165.3 L39.7,173.2 L32.3,172.1"/>
    <path d="M41.2,178.5 A12.6,12.6 0 0 1 17.4,184.2 M16.3,191.5 L17.4,184.2 L24.8,185.1"/>
    <path d="M13.5,228.6 A12,12 0 0 1 36.9,222.8 M38.4,215.4 L37.4,223.2 L29.7,222.2"/>
    <path d="M28.4,241.3 C23.5,241.5 17,239.5 15,235.4 M13.7,241.8 L14.6,234.3 L22.5,235.4"/>
    <path d="M28.4,238.4 V241.3 C28.6,242.2 29.3,242.4 32.7,242.4 M28.4,232.6 V230 C28.5,228.9 29.7,228.1 32.7,228.1 M38.2,228.1 C41,228.1 42.5,229 42.5,230.5 V232.6"/>
    <path d="M34.8,240.3 V234.3 L39.7,234.5 M37.6,237.3 L41.6,240.9"/>
    <rect x="-11.5" y="-6.5" width="23" height="13" rx="2.2" transform="translate(28.45,280.5) rotate(-45)"/>
    <path d="M23.5,275.7 L33.3,285.3 M17.1,293.1 H40.3"/>
  </g>
</svg>
</body></html>
